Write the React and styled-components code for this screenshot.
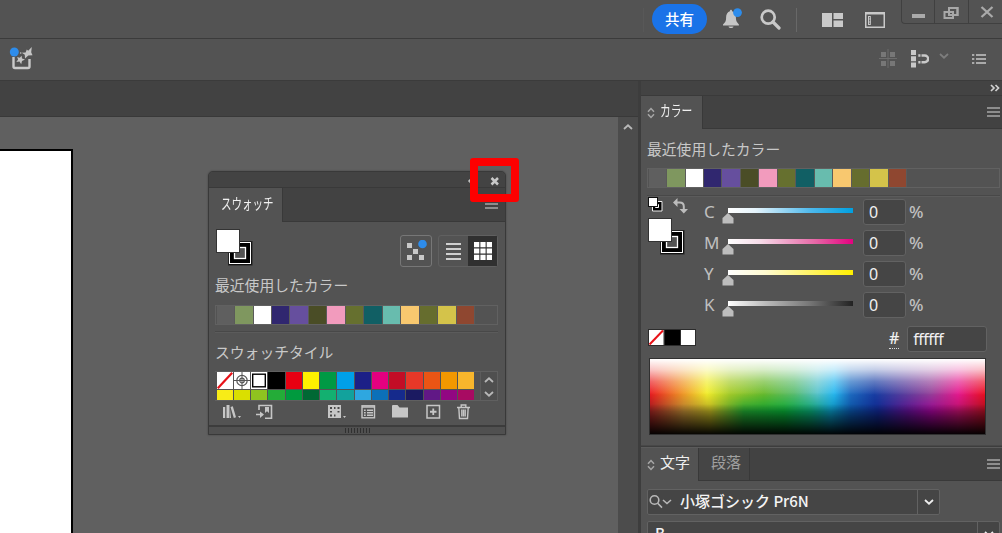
import React from "react";
import styled, { createGlobalStyle, css } from "styled-components";

const GlobalStyle = createGlobalStyle`
  * {
    box-sizing: border-box;
  }

  body {
    margin: 0;
    overflow: hidden;
    background: #535353;
    color: #c8c8c8;
    font-family: "Open Sans", "Noto Sans CJK JP", sans-serif;
  }

  svg {
    display: block;
    flex: none;
  }
`;

const Window = styled.div`
  display: flex;
  flex-direction: column;
  width: 1002px;
  height: 533px;
  overflow: hidden;
`;

const AppBar = styled.header`
  display: flex;
  justify-content: flex-end;
  flex: none;
  height: 39px;
  border-bottom: 1px solid #3b3b3b;
`;

const ShareButton = styled.button`
  width: 55px;
  height: 30px;
  margin: 4px 15px 0 0;
  padding: 0 0 1px;
  border: 0;
  border-radius: 15px;
  background: #1a73e8;
  color: #fff;
  font: 500 14.5px "Noto Sans CJK JP", sans-serif;
`;

const BarIcon = styled.div`
  margin: ${props => props.$top}px ${props => props.$right}px 0 0;
`;

const BarDivider = styled.div`
  width: 1px;
  height: 24px;
  margin: 8px ${props => props.$right}px 0 0;
  background: #686868;
`;

const WindowButtons = styled.div`
  display: flex;
  width: 101px;
  height: 24px;
  border: 1px solid #404040;
  border-width: 0 0 1px 1px;
  border-radius: 0 0 0 4px;

  > div {
    display: flex;
    justify-content: center;
    width: 34px;
    border-right: 1px solid #404040;
  }

  > div:last-child {
    padding-left: 3px;
    border-right: 0;
  }
`;

const ControlBar = styled.div`
  display: flex;
  flex: none;
  height: 42px;
  padding-left: 9px;
  border-bottom: 1px solid #3b3b3b;
`;

const Spacer = styled.div`
  flex: 1;
`;

const Workspace = styled.div`
  display: flex;
  flex: 1;
  min-height: 0;
`;

const Document = styled.main`
  display: flex;
  flex-direction: column;
  width: 638px;
`;

const DocumentTabs = styled.div`
  flex: none;
  height: 36px;
  background: #424242;
  border-bottom: 1px solid #393939;
`;

const DocumentView = styled.div`
  display: flex;
  flex: 1;
`;

const Canvas = styled.div`
  flex: 1;
  padding-top: 32px;
  background: #606060;
`;

const Artboard = styled.div`
  width: 73px;
  height: 100%;
  border: 2px solid #000;
  border-width: 2px 2px 0 0;
  background: #fff;
`;

const Scrollbar = styled.div`
  display: flex;
  justify-content: center;
  width: 20px;
  padding-top: 7px;
  background: #4c4c4c;
`;

const Dock = styled.aside`
  display: flex;
  flex-direction: column;
  width: 364px;
  border-left: 3px solid #3d3d3d;
  background: #535353;
`;

const DockHeader = styled.div`
  display: flex;
  justify-content: flex-end;
  flex: none;
  height: 15px;
  padding: 3px 2px 0 0;
  border-bottom: 1px solid #3a3a3a;
  background: #434343;
`;

const Tabs = styled.div`
  display: flex;
  flex: none;
  height: ${props => props.$height}px;
  background: #424242;
`;

const Tab = styled.div`
  display: flex;
  align-items: center;
  gap: 5px;
  width: ${props => props.$width}px;
  padding: 0 0 5px ${props => props.$left}px;
  border-right: 1px solid #393939;
  border-bottom: ${props => (props.$active ? 0 : "1px solid #393939")};
  background: ${props => (props.$active ? "#535353" : "#454545")};
  color: ${props => (props.$active ? "#f0f0f0" : "#a0a0a0")};
  font: 400 15px/20px "Noto Sans CJK JP", sans-serif;
  white-space: nowrap;
`;

const NarrowText = styled.span`
  display: block;
  transform: scaleX(${props => props.$scale});
  transform-origin: left;
`;

const TabMenu = styled.div`
  display: flex;
  flex: 1;
  justify-content: flex-end;
  padding: ${props => props.$top}px ${props => props.$right}px 0 0;
  border-bottom: 1px solid #393939;
`;

const SectionTitle = styled.div`
  height: 20px;
  color: #c8c8c8;
  font: 400 14.8px/20px "Noto Sans CJK JP", sans-serif;
  white-space: nowrap;
`;

const RecentStrip = styled.div`
  display: flex;
  width: ${props => props.$width}px;
  height: 20px;
  padding-left: 0.6px;
  border: 1px solid #616161;
`;

const RecentColor = styled.div`
  width: 18.48px;
  border-right: 1px solid #5a5a5a;
  background: ${props => props.$color};
`;

const Rule = styled.div`
  height: 2px;
  border-top: 1px solid #484848;
  border-bottom: 1px solid #5b5b5b;
`;

const ColorBody = styled.div`
  display: flex;
  flex-direction: column;
  flex: none;
  height: 316px;
  padding: 10px 2px 0 6px;
`;

const SliderArea = styled.div`
  display: flex;
  height: 129px;
`;

const ColorProxy = styled.div`
  width: 57px;
  padding: 0 0 0 1px;
`;

const SliderRow = styled.div`
  display: flex;
  height: 31px;
  padding-top: 2px;
`;

const Channel = styled.div`
  width: 18px;
  color: #c0c0c0;
  font: 17px/25px "Noto Sans", sans-serif;
`;

const SliderTrack = styled.div`
  width: 137px;
  padding: 9px 0 0 6px;

  svg {
    margin: 0 0 0 -6px;
  }
`;

const Ramp = styled.div`
  width: 125px;
  height: 5px;
  background: linear-gradient(90deg, ${props => props.$ramp});
`;

const Field = styled.div`
  width: ${props => props.$width}px;
  height: 26px;
  margin-left: ${props => props.$gap}px;
  padding-left: 5px;
  border: 1px solid #626262;
  border-radius: 3px;
  background: #454545;
  color: #f0f0f0;
  font: 16px/25px "Noto Sans", sans-serif;
`;

const Unit = styled.div`
  margin-left: 3px;
  color: #c0c0c0;
  font: 500 17px/25px "Noto Sans", sans-serif;
`;

const HexRow = styled.div`
  display: flex;
  height: 32px;
`;

const HexLabel = styled.div`
  height: 22px;
  margin: 1px 0 0 193px;
  border-bottom: 1px dotted #ddd;
  color: #f0f0f0;
  font: 500 16px/23px "Noto Sans", sans-serif;
`;

const QuickChips = styled.div`
  padding: 3px 0 0 1px;
`;

const HexText = styled.span`
  display: block;
  font-variant-ligatures: none;
  font-size: 16px;
  letter-spacing: -0.5px;
`;

// two hue bands: bright tints above, deeper shades fading in below
const Spectrum = styled.div`
  display: grid;
  width: 337px;
  height: 77px;
  margin-left: 2px;
  border: 1px solid #303030;
  background: linear-gradient(
    90deg,
    #eb1a20 0%,
    #f08024 8%,
    #f2ee2c 17%,
    #a4cb28 24%,
    #6aba2c 34%,
    #5cbd70 43%,
    #5ac4cc 50%,
    #28b8f0 55%,
    #1e6ac0 60%,
    #183ea4 67%,
    #523f9e 75%,
    #954199 84%,
    #e51a90 92%,
    #ec1020 100%
  );

  &::before,
  &::after {
    content: "";
    grid-area: 1 / 1;
  }

  &::before {
    background: linear-gradient(
      90deg,
      #982020 0%,
      #b08030 10%,
      #b4aa20 18%,
      #20a030 28%,
      #08a634 40%,
      #08a070 48%,
      #0890b8 54%,
      #0a50a0 60%,
      #10268c 68%,
      #5c108c 77%,
      #980490 84%,
      #b81068 92%,
      #a81020 100%
    );
    mask-image: linear-gradient(transparent 45%, #000 70%);
  }

  &::after {
    z-index: 1;
    background: linear-gradient(
      rgba(255, 255, 255, 1) 0%,
      rgba(255, 255, 255, 0.75) 14%,
      rgba(255, 255, 255, 0.32) 30%,
      rgba(255, 255, 255, 0) 48%,
      rgba(0, 0, 0, 0) 60%,
      rgba(0, 0, 0, 0.45) 77%,
      rgba(0, 0, 0, 0.96) 100%
    );
  }
`;

const FontArea = styled.div`
  display: flex;
  flex-direction: column;
  gap: 6px;
  flex: none;
  height: 80px;
  padding: 8px 0 0 6px;
`;

const FontField = styled.div`
  display: flex;
  width: ${props => props.$width}px;
  height: 26px;
  border: 1px solid #626262;
  border-radius: 2px;
  background: #454545;
  color: #f4f4f4;
  font: 500 15px/22px "Noto Sans CJK JP", sans-serif;
  white-space: nowrap;
`;

const Dropdown = styled.div`
  display: flex;
  align-items: center;
  justify-content: center;
  width: 22px;
  margin-left: auto;
  border-left: 1px solid #626262;
`;

const FloatingPanel = styled.section`
  position: absolute;
  left: 208px;
  top: 171px;
  display: flex;
  flex-direction: column;
  width: 298px;
  height: 264px;
  border: 1px solid #393939;
  border-radius: 5px 5px 0 0;
  background: #535353;
  box-shadow: 0 0 2px rgba(0, 0, 0, 0.35);
`;

const PanelGrip = styled.div`
  display: flex;
  justify-content: flex-end;
  flex: none;
  height: 16px;
  padding: 5px 3px 0 0;
  border-bottom: 1px solid #393939;
  border-radius: 4px 4px 0 0;
  background: #434343;
`;

const PanelBody = styled.div`
  display: flex;
  flex: 1;
  flex-direction: column;
  padding: 7px 7px 0 6px;
`;

const ViewRow = styled.div`
  display: flex;
  height: 46px;
  padding-left: 1px;
`;

const viewButton = css`
  display: flex;
  align-items: center;
  justify-content: center;
  height: 32px;
`;

const ThemeButton = styled.div`
  ${viewButton}
  width: 32px;
  margin: 6px 6px 0 auto;
  border: 1px solid #777;
  border-radius: 3px;
`;

const ViewToggle = styled.div`
  display: flex;
  height: 32px;
  margin-top: 6px;
  border: 1px solid #606060;
  border-radius: 3px;
`;

const ViewOption = styled.div`
  ${viewButton}
  width: 29px;
  height: 30px;
  background: ${props => (props.$on ? "#303030" : "transparent")};
`;

const SwatchBox = styled.div`
  display: flex;
  justify-content: space-between;
  width: 283px;
  height: 30px;
  padding: 0 0 0 1.7px;
  border: 1px solid #606060;
  border-left: 0;
`;

const SwatchGrid = styled.div`
  display: grid;
  grid-template-columns: repeat(15, 16.24px);
  grid-template-rows: 17px 10px;
  gap: 1px;
`;

const Swatch = styled.div`
  background: ${props => props.$color};
`;

const SwatchScroll = styled.div`
  display: flex;
  flex-direction: column;
  gap: 8px;
  width: 17px;
  padding: 5px 0 0 3px;
  border-left: 1px solid #5c5c5c;
  background: #4f4f4f;
`;

const PanelTools = styled.div`
  display: flex;
  height: 24px;
  padding: 3px 0 0 7px;
`;

const Tool = styled.div`
  width: ${props => props.$width}px;
`;

const PanelFooter = styled.div`
  display: flex;
  justify-content: center;
  flex: none;
  height: 9px;
  border-top: 2px solid #3c3c3c;
  background: #505050;
`;

const Highlight = styled.div`
  position: absolute;
  left: 470px;
  top: 158px;
  width: 49px;
  height: 44px;
  border: 8px solid #fe0000;
  border-radius: 3px;
`;

const recentColors = [
  "#5f5f5f", "#7f975f", "#ffffff", "#30276f", "#664f9e", "#4a4d26", "#f29bbd",
  "#66702f", "#115f64", "#68bcae", "#f8c86f", "#666d2e", "#d4c34a", "#8f4730"
];

const swatchColors = [
  "#000000", "#e80012", "#fff100", "#009944", "#00a0e9", "#1c2087", "#e4007f",
  "#c30d26", "#e73828", "#ea5514", "#f39800", "#f8b62c",
  "#f8ec17", "#dadf00", "#8fc31f", "#24ac38", "#009a3e", "#006834", "#13b070",
  "#12a29c", "#2ea7e0", "#0c70b8", "#152a8c", "#1b1a61", "#611886", "#920782", "#a80b62"
];

const channels = [
  { name: "C", ramp: "#fff 0%, #e6f4fc 22%, #4bb8ec 67%, #00a0e0 100%" },
  { name: "M", ramp: "#fff 0%, #f6dde9 25%, #e667a6 70%, #e4007f 100%" },
  { name: "Y", ramp: "#fff 0%, #fffbd0 30%, #fff24a 75%, #fff000 100%" },
  { name: "K", ramp: "#fff 0%, #bbb 30%, #777 65%, #222 100%" }
];

function Chevron({ width = 10, height = 6, up, color = "#b8b8b8", stroke = 1.8 }) {
  const d = up ? "M1 5 5 1.3 9 5" : "M1 1 5 4.7 9 1";
  return (
    <svg width={width} height={height} viewBox="0 0 10 6" fill="none" stroke={color} strokeWidth={stroke}>
      <path d={d} />
    </svg>
  );
}

function MenuIcon({ width = 13 }) {
  return (
    <svg width={width} height="10" stroke="#a6a6a6" strokeWidth="1.3">
      <path d={`M0 1h${width}M0 5h${width}M0 9h${width}`} />
    </svg>
  );
}

function SortArrows() {
  return (
    <svg width="8" height="12" fill="none" stroke="#a6a6a6" strokeWidth="1.5" style={{ marginTop: 5 }}>
      <path d="M1 4.8 4 1.5 7 4.8M1 7.2 4 10.5 7 7.2" />
    </svg>
  );
}

function FillStroke() {
  return (
    <svg width="37" height="37">
      <rect x="12.500" y="12.500" width="23.500" height="23.500" fill="#000" stroke="#222" />
      <rect x="13.500" y="13.500" width="21" height="21" fill="#000" stroke="#fff" />
      <rect x="18.500" y="18.500" width="11" height="11" fill="#535353" stroke="#fff" strokeWidth="1.300" />
      <rect x=".5" y=".5" width="23" height="23" fill="#fff" stroke="#333" />
    </svg>
  );
}

function NoneSwatch() {
  return (
    <svg width="16" height="17">
      <rect width="16" height="17" fill="#fff" />
      <path d="M.8 16.200 15.200.8" stroke="#e81218" strokeWidth="2.200" />
    </svg>
  );
}

function RegistrationSwatch() {
  return (
    <svg width="16" height="17" fill="none" stroke="#555">
      <rect width="16" height="17" fill="#fff" stroke="none" />
      <circle cx="8" cy="8.500" r="5.200" strokeWidth="1.200" />
      <circle cx="8" cy="8.500" r="2.300" strokeWidth="1.200" />
      <path d="M8 0v17M0 8.500h16" strokeWidth="1" />
    </svg>
  );
}

function WhiteSwatch() {
  return (
    <svg width="16" height="17">
      <rect width="16" height="17" fill="#fff" />
      <rect x="1.700" y="2.200" width="12.600" height="12.600" fill="#fff" stroke="#000" strokeWidth="1.400" />
    </svg>
  );
}

function RecentColors({ width }) {
  return (
    <RecentStrip $width={width}>
      {recentColors.map((color, index) => (
        <RecentColor key={index} $color={color} />
      ))}
    </RecentStrip>
  );
}

function TopBar() {
  return (
    <AppBar>
      <BarDivider $right={8} style={{ opacity: 0.25 }} />
      <ShareButton>共有</ShareButton>
      <BarIcon $top={7} $right={17}>
        <svg width="21" height="23" viewBox="0 0 21 23" fill="#c6c6c6">
          <path d="M1 18.500v-1l2-2.200c.9-1.200 1.100-3 1.100-5 0-3.200 1.400-5.300 3.800-6.100 0-2 2.200-2 2.200 0 2.400.8 3.800 2.900 3.800 6.100 0 2 .3 3.800 1.200 5l1.800 2.200v1zM6.500 19.500h5c-.4 2-4.600 2-5 0z" />
          <circle cx="15.500" cy="5.600" r="4.400" fill="#2d8ceb" />
        </svg>
      </BarIcon>
      <BarIcon $top={9} $right={15}>
        <svg width="21" height="21" fill="none" stroke="#c9c9c9">
          <circle cx="8.200" cy="8.200" r="6.500" strokeWidth="2.700" />
          <path d="m13 13 6 6" strokeWidth="3.200" strokeLinecap="round" />
        </svg>
      </BarIcon>
      <BarDivider $right={25} />
      <BarIcon $top={13} $right={22}>
        <svg width="21" height="14" fill="#c9c9c9">
          <path d="M0 0h10v14H0zM11.500 0h9.500v6h-9.500zM11.500 7.500h9.500v6.500h-9.500z" />
        </svg>
      </BarIcon>
      <BarIcon $top={12} $right={16}>
        <svg width="20" height="16" fill="none" stroke="#c9c9c9">
          <rect x=".75" y=".75" width="18.500" height="14.500" strokeWidth="1.500" />
          <path d="M0 1.500h20" strokeWidth="2" />
          <rect x="3.500" y="4.500" width="1.800" height="8" />
          <path d="M4 7h2M4 10h2" strokeWidth=".8" />
        </svg>
      </BarIcon>
      <WindowButtons>
        <div>
          <svg width="13" height="23">
            <rect y="14" width="13" height="4" fill="#aaa" />
          </svg>
        </div>
        <div>
          <svg width="16" height="23" fill="none" stroke="#a8a8a8" strokeWidth="2">
            <path d="M6 11V8h8.500v7H11" />
            <rect x="1.500" y="12" width="8.500" height="6" />
            <rect x="6" y="8" width="8.500" height="7" />
          </svg>
        </div>
        <div>
          <svg width="14" height="23" stroke="#aaa" strokeWidth="2.300">
            <path d="m1.500 7 11 10M12.500 7l-11 10" />
          </svg>
        </div>
      </WindowButtons>
    </AppBar>
  );
}

function OptionsBar() {
  return (
    <ControlBar>
      <BarIcon $top={7} $right={0}>
        <svg width="24" height="25" fill="#c6c6c6">
          <path d="M4.500 11v9.500q0 1.500 1.500 1.500h13q1.500 0 1.500-1.500V13" fill="none" stroke="#c9c9c9" strokeWidth="2.400" />
          <path d="m22.800 1-.6 5.300 1.300 3-4.200.2-3.300 3-.2-3.700-3-2 3.800-.4 1.200-3 1.400 1.300z" />
          <path d="m12.600 9.800.4 2.700 3 1-3 1.500-.8 3.200-1.700-2.600-3.200.5 1.800-2.500-1-2.600 2.700.7z" />
          <circle cx="11.700" cy="7" r=".8" />
          <circle cx="5.300" cy="6" r="4.500" fill="#2d8ceb" />
        </svg>
      </BarIcon>
      <Spacer />
      <BarIcon $top={10} $right={14}>
        <svg width="18" height="19" fill="#777">
          <path d="M2 3h5v5H2zM11 3h5v5h-5zM2 12h5v5H2zM11 12h5v5h-5z" />
          <path d="M9 0v19M0 9.500h18" stroke="#6d6d6d" strokeWidth="1" />
        </svg>
      </BarIcon>
      <BarIcon $top={11} $right={10}>
        <svg width="18" height="18" fill="#c8c8c8">
          <path d="M0 0h5v5H0zM0 6.300h5v5H0zM0 12.600h5v5H0z" />
          <path d="M10.500 5.500h3.300a3.200 3.200 0 0 1 0 6.700h-3.300" fill="none" stroke="#c8c8c8" strokeWidth="2.400" />
          <path d="M7.300 4.300h2.200v2.400H7.300zM7.300 11h2.200v2.400H7.300z" />
        </svg>
      </BarIcon>
      <BarIcon $top={14} $right={23}>
        <Chevron color="#7d7d7d" />
      </BarIcon>
      <BarIcon $top={14} $right={16}>
        <svg width="14" height="12" stroke="#c8c8c8" strokeWidth="1.500">
          <path d="M4 2h10M4 6h10M4 10h10M0 2h2.300M0 6h2.300M0 10h2.300" />
        </svg>
      </BarIcon>
    </ControlBar>
  );
}

function ColorPanel() {
  return (
    <>
      <Tabs $height={33}>
        <Tab $active $width={62} $left={6}>
          <SortArrows />
          <NarrowText $scale={0.72}>カラー</NarrowText>
        </Tab>
        <TabMenu $top={11} $right={2}>
          <MenuIcon />
        </TabMenu>
      </Tabs>
      <ColorBody>
        <SectionTitle>最近使用したカラー</SectionTitle>
        <div style={{ height: 9 }} />
        <RecentColors width={353} />
        <div style={{ height: 7 }} />
        <Rule />
        <SliderArea>
          <ColorProxy>
            <svg width="42" height="21">
              <path d="M4.500 4.500h9.500v9.500H4.500z" fill="#000" stroke="#eee" />
              <path d="M7.500 7.500h3v3h-3z" fill="#535353" stroke="#fff" />
              <rect x=".5" y=".5" width="9" height="9" fill="#fff" stroke="#111" />
              <path d="M27.500 5.500h4.300q4 0 4 4v4" fill="none" stroke="#bcbcbc" strokeWidth="2" />
              <path d="m29.500 1v9L25 5.500zM31.500 12h8.500l-4.200 4.500z" fill="#bcbcbc" />
            </svg>
            <FillStroke />
          </ColorProxy>
          <div>
            {channels.map(channel => (
              <SliderRow key={channel.name}>
                <Channel>{channel.name}</Channel>
                <SliderTrack>
                  <Ramp $ramp={channel.ramp} />
                  <svg width="12" height="11" fill="#bdbdbd">
                    <path d="M6 0 11.500 5v5.500H.5V5z" />
                  </svg>
                </SliderTrack>
                <Field $width={43} $gap={4}>0</Field>
                <Unit>%</Unit>
              </SliderRow>
            ))}
          </div>
        </SliderArea>
        <HexRow>
          <QuickChips>
            <svg width="48" height="17">
              <rect width="48" height="17" fill="#2c2c2c" />
              <rect x="1" y="1" width="14.500" height="15" fill="#fff" />
              <rect x="17" y="1" width="15" height="15" fill="#000" />
              <rect x="33" y="1" width="14" height="15" fill="#fff" />
              <path d="M1.500 15.500 15 1.500" stroke="#e81218" strokeWidth="2" />
            </svg>
          </QuickChips>
          <HexLabel>#</HexLabel>
          <Field $width={80} $gap={8}>
            <HexText>ffffff</HexText>
          </Field>
        </HexRow>
        <Spectrum />
      </ColorBody>
    </>
  );
}

function CharacterPanel() {
  return (
    <>
      <Rule style={{ flex: "none", height: 3, background: "#3d3d3d" }} />
      <Tabs $height={33}>
        <Tab $active $width={58} $left={6}>
          <SortArrows />
          文字
        </Tab>
        <Tab $width={51} $left={12}>段落</Tab>
        <TabMenu $top={11} $right={2}>
          <MenuIcon />
        </TabMenu>
      </Tabs>
      <FontArea>
        <FontField $width={293}>
          <svg width="32" height="24" fill="none" stroke="#b8b8b8" strokeWidth="1.600">
            <circle cx="6.500" cy="10" r="4.300" />
            <path d="m9.700 13.300 4.300 4.300M15 10l4 3.500 4-3.500" />
          </svg>
          小塚ゴシック Pr6N
          <Dropdown>
            <Chevron color="#eee" />
          </Dropdown>
        </FontField>
        <FontField $width={353} style={{ paddingLeft: 7 }}>
          B
          <Dropdown>
            <Chevron color="#eee" />
          </Dropdown>
        </FontField>
      </FontArea>
    </>
  );
}

function SwatchTools() {
  return (
    <PanelTools>
      <Tool $width={34}>
        <svg width="20" height="16" fill="#c6c6c6">
          <path d="M1 3h2.200v11H1zM4.500 1h3v13h-3zM8.500 3l2.300-.8L14 13.300l-2.200.8zM9 5v9H8zM16 12h3l-1.500 2z" />
        </svg>
      </Tool>
      <Tool $width={71}>
        <svg width="17" height="16" fill="none" stroke="#c6c6c6" strokeWidth="1.600">
          <path d="M3 6V1.500h12.500v12.700H9M0 10.500h6.500" />
          <path d="m4 7.500 4 3-4 3.500z" fill="#c6c6c6" stroke="none" />
          <path d="M9 3h4v6l-2-1.700L9 9z" fill="#c6c6c6" stroke="none" />
        </svg>
      </Tool>
      <Tool $width={34}>
        <svg width="20" height="16">
          <path d="M1 1h13v13H1z" fill="#c6c6c6" />
          <path d="M3 3h2v2H3zM7 3h1.500v2H7zM10.500 3h2v2h-2zM3 7h2v1.500H3zM10.500 7h2v1.500h-2zM3 10.500h2v2H3zM7 10.500h1.500v2H7z" fill="#484848" />
          <path d="M16 12h3l-1.500 2z" fill="#c6c6c6" />
        </svg>
      </Tool>
      <Tool $width={31}>
        <svg width="15" height="16" fill="none" stroke="#c6c6c6" strokeWidth="1.400">
          <rect x="1" y="1.800" width="12.500" height="12" />
          <path d="M1 3h12.500M3 6.200h1.700M6 6.200h6M3 8.700h1.700M6 8.700h6M3 11.200h1.700M6 11.200h6" />
        </svg>
      </Tool>
      <Tool $width={34}>
        <svg width="17" height="16" fill="#c6c6c6">
          <path d="M0 3V2q0-1 1-1h4.500l2 2.500H16V13.500H0z" />
        </svg>
      </Tool>
      <Tool $width={31}>
        <svg width="15" height="16" fill="none" stroke="#c6c6c6" strokeWidth="1.500">
          <rect x="1" y="1.500" width="12.500" height="12.500" />
          <path d="M7.250 4.500v6.500M4 7.750h6.500" strokeWidth="1.800" />
        </svg>
      </Tool>
      <Tool $width={15}>
        <svg width="14" height="16" fill="none" stroke="#c6c6c6" strokeWidth="1.400">
          <path d="M0 3.500h13M4.200 3V1h4.600v2M1.800 3.500l.7 11h8l.7-11M4.800 5.500v7M6.500 5.500v7M8.200 5.500v7" />
        </svg>
      </Tool>
    </PanelTools>
  );
}

function SwatchesPanel() {
  return (
    <FloatingPanel>
      <PanelGrip>
        <svg width="38" height="9" fill="none" stroke="#c8c8c8">
          <path d="m8 1-3 3 3 3M12 1l-3 3 3 3" strokeWidth="1.500" />
          <path d="m27.500 1 6.500 6.500M34 1l-6.500 6.500" strokeWidth="2.500" />
        </svg>
      </PanelGrip>
      <Tabs $height={34}>
        <Tab $active $width={74} $left={12}>
          <NarrowText $scale={0.7}>スウォッチ</NarrowText>
        </Tab>
        <TabMenu $top={11} $right={7}>
          <MenuIcon />
        </TabMenu>
      </Tabs>
      <PanelBody>
        <ViewRow>
          <FillStroke />
          <ThemeButton>
            <svg width="22" height="22" fill="#c8c8c8">
              <path d="M2 3h5v5H2zM8 9h5v5H8zM2 15h5v5H2zM14 15h5v5h-5z" />
              <circle cx="17.500" cy="4" r="4.300" fill="#2d8ceb" />
            </svg>
          </ThemeButton>
          <ViewToggle>
            <ViewOption>
              <svg width="15" height="18" stroke="#cfcfcf" strokeWidth="2.200">
                <path d="M0 2h15M0 7h15M0 12h15M0 17h15" />
              </svg>
            </ViewOption>
            <ViewOption $on>
              <svg width="18" height="18" fill="#fff">
                <path d="M0 0h5.300v5.300H0zM6.400 0h5.200v5.300H6.400zM12.700 0H18v5.300h-5.300zM0 6.400h5.300v5.200H0zM6.400 6.400h5.200v5.200H6.400zM12.700 6.400H18v5.200h-5.300zM0 12.700h5.300V18H0zM6.400 12.700h5.200V18H6.400zM12.700 12.700H18V18h-5.300z" />
              </svg>
            </ViewOption>
          </ViewToggle>
        </ViewRow>
        <SectionTitle>最近使用したカラー</SectionTitle>
        <div style={{ height: 10 }} />
        <RecentColors width={283} />
        <div style={{ height: 6 }} />
        <Rule />
        <div style={{ height: 9 }} />
        <SectionTitle>スウォッチタイル</SectionTitle>
        <div style={{ height: 9 }} />
        <SwatchBox>
          <SwatchGrid>
            <NoneSwatch />
            <RegistrationSwatch />
            <WhiteSwatch />
            {swatchColors.map((color, index) => (
              <Swatch key={index} $color={color} />
            ))}
          </SwatchGrid>
          <SwatchScroll>
            <Chevron up />
            <Chevron />
          </SwatchScroll>
        </SwatchBox>
        <SwatchTools />
      </PanelBody>
      <PanelFooter>
        <svg width="25" height="6" stroke="#303030">
          <path d="M.5 1v5M3.500 1v5M6.500 1v5M9.500 1v5M12.500 1v5M15.500 1v5M18.500 1v5M21.500 1v5M24.500 1v5" />
        </svg>
      </PanelFooter>
    </FloatingPanel>
  );
}

export default function App() {
  return (
    <Window>
      <GlobalStyle />
      <TopBar />
      <OptionsBar />
      <Workspace>
        <Document>
          <DocumentTabs />
          <DocumentView>
            <Canvas>
              <Artboard />
            </Canvas>
            <Scrollbar>
              <Chevron up />
            </Scrollbar>
          </DocumentView>
        </Document>
        <Dock>
          <DockHeader>
            <svg width="10" height="8" fill="none" stroke="#d0d0d0" strokeWidth="1.700">
              <path d="m1 1 3 3-3 3M5.500 1l3 3-3 3" />
            </svg>
          </DockHeader>
          <ColorPanel />
          <CharacterPanel />
        </Dock>
      </Workspace>
      <SwatchesPanel />
      <Highlight />
    </Window>
  );
}
